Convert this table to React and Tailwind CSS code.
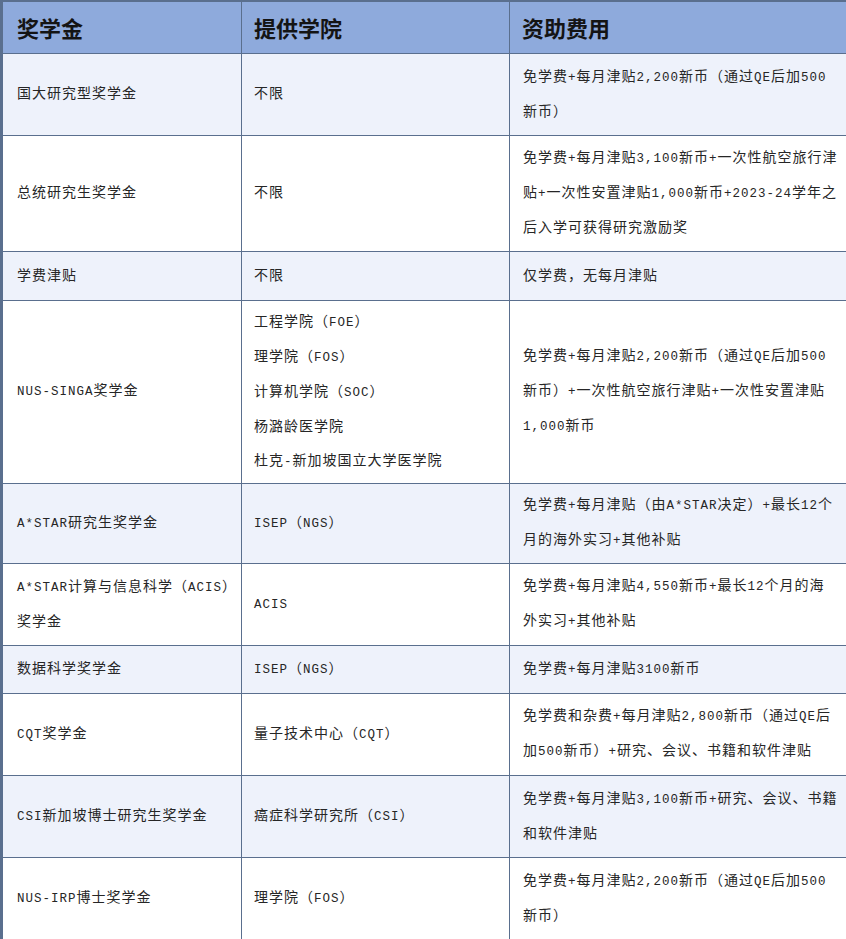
import React from "react"

const rows = [
    { h: "h-[82px]", name: ["国大研究型奖学金"], school: ["不限"], fund: ["免学费+每月津贴2,200新币（通过QE后加500", "新币）"] },
    { h: "h-[116px]", name: ["总统研究生奖学金"], school: ["不限"], fund: ["免学费+每月津贴3,100新币+一次性航空旅行津", "贴+一次性安置津贴1,000新币+2023-24学年之", "后入学可获得研究激励奖"] },
    { h: "h-[49px]", name: ["学费津贴"], school: ["不限"], fund: ["仅学费，无每月津贴"] },
    {
        h: "h-[183px]",
        name: ["NUS-SINGA奖学金"],
        school: ["工程学院（FOE）", "理学院（FOS）", "计算机学院（SOC）", "杨潞龄医学院", "杜克-新加坡国立大学医学院"],
        fund: ["免学费+每月津贴2,200新币（通过QE后加500", "新币）+一次性航空旅行津贴+一次性安置津贴", "1,000新币"],
    },
    { h: "h-[80px]", name: ["A*STAR研究生奖学金"], school: ["ISEP（NGS）"], fund: ["免学费+每月津贴（由A*STAR决定）+最长12个", "月的海外实习+其他补贴"] },
    { h: "h-[82px]", name: ["A*STAR计算与信息科学（ACIS）", "奖学金"], school: ["ACIS"], fund: ["免学费+每月津贴4,550新币+最长12个月的海", "外实习+其他补贴"] },
    { h: "h-[48px]", name: ["数据科学奖学金"], school: ["ISEP（NGS）"], fund: ["免学费+每月津贴3100新币"] },
    { h: "h-[82px]", name: ["CQT奖学金"], school: ["量子技术中心（CQT）"], fund: ["免学费和杂费+每月津贴2,800新币（通过QE后", "加500新币）+研究、会议、书籍和软件津贴"] },
    { h: "h-[82px]", name: ["CSI新加坡博士研究生奖学金"], school: ["癌症科学研究所（CSI）"], fund: ["免学费+每月津贴3,100新币+研究、会议、书籍", "和软件津贴"] },
    { h: "h-[82px]", name: ["NUS-IRP博士奖学金"], school: ["理学院（FOS）"], fund: ["免学费+每月津贴2,200新币（通过QE后加500", "新币）"] },
]

// latin runs are half width in the source font, so set them a bit smaller
const Mixed = ({ text }) => {
    const parts = text.split(/([\x20-\x7E]+)/).filter(Boolean)
    return parts.map((p, i) =>
        /^[\x20-\x7E]+$/.test(p)
            ? <span key={i} className="text-[12.5px]">{p}</span>
            : <span key={i}>{p}</span>
    )
}

// each cell keeps the line breaks from the source document
const Lines = ({ lines }) => (
    <>
        {lines.map((l, i) => (
            <div key={i} className="whitespace-nowrap"><Mixed text={l} /></div>
        ))}
    </>
)

const App = () => {
    return (
        <div className="w-[846px] bg-white">
            <table className="w-[846px] table-fixed border-collapse border-l-[3px] border-r-2 border-t-2 border-[#5a6f8e] text-[14px] leading-[34px] tracking-[1px] text-[#262626] font-['Liberation_Mono','Noto_Sans_CJK_SC',monospace]">
                <colgroup>
                    <col className="w-[240px]" />
                    <col className="w-[268px]" />
                    <col className="w-[338px]" />
                </colgroup>
                <thead>
                    <tr className="h-[52px] bg-[#8eaadc] text-[22px] font-bold tracking-normal text-[#141414] font-['Noto_Sans_CJK_SC',sans-serif]">
                        <th className="border border-[#5a6f8e] pl-[14px] text-left font-bold">奖学金</th>
                        <th className="border border-[#5a6f8e] pl-3 text-left font-bold">提供学院</th>
                        <th className="border border-[#5a6f8e] pl-3 text-left font-bold">资助费用</th>
                    </tr>
                </thead>
                <tbody>
                    {rows.map((r, i) => (
                        <tr key={i} className={`${r.h} ${i % 2 === 0 ? "bg-[#eef2fb]" : "bg-white"}`}>
                            <td className="border border-[#5a6f8e] pl-[14px] align-middle"><Lines lines={r.name} /></td>
                            <td className="border border-[#5a6f8e] pl-3 align-middle"><Lines lines={r.school} /></td>
                            <td className="border border-[#5a6f8e] pl-[13px] align-middle"><Lines lines={r.fund} /></td>
                        </tr>
                    ))}
                </tbody>
            </table>
        </div>
    )
}

export default App
